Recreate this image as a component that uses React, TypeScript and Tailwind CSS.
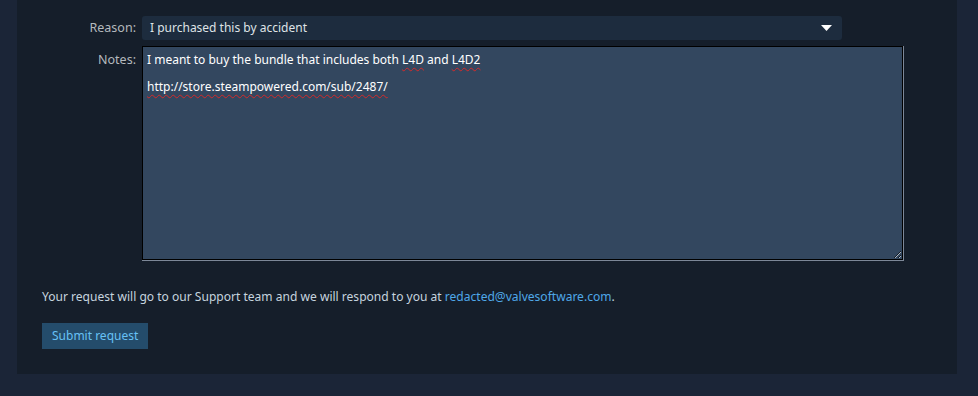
import React from "react";

const font = { fontFamily: '"Noto Sans", "Open Sans", Arial, sans-serif' };

function Wavy({ children }: { children: React.ReactNode }) {
  return (
    <span className="underline decoration-wavy decoration-[#d42a2a] decoration-1 underline-offset-[3px]">
      {children}
    </span>
  );
}

export default function App() {
  return (
    <div
      className="w-[978px] h-[396px] bg-[#1b2537] overflow-hidden"
      style={font}
    >
      <div className="ml-[17px] w-[940px] h-[374px] bg-[#151e2a] pl-[25px] pt-[16px] flex flex-col">
        <div className="flex items-center">
          <div className="w-[100px] pr-[6px] text-right text-[12.5px] text-[#b4b9bd]">Reason:</div>
          <div className="w-[700px] h-[24px] rounded-[3px] bg-[#1d2c3e] flex items-center justify-between pl-[8px] pr-[10px]">
            <span className="text-[12px] text-[#dfe3e6]">I purchased this by accident</span>
            <svg width="11" height="6" viewBox="0 0 11 6">
              <path d="M0 0H11L5.5 6Z" fill="#ffffff" />
            </svg>
          </div>
        </div>
        <div className="flex items-start mt-[6px]">
          <div className="w-[100px] pr-[6px] pt-[5px] text-right text-[12.5px] text-[#b4b9bd]">Notes:</div>
          <div className="border-r border-b border-[#7d8898]">
            <div className="w-[761px] h-[214px] bg-[#33475f] border border-black resize overflow-auto px-[4px] pt-[3px] text-[12px] leading-[19px] text-white">
              <div>
                I meant to buy the bundle that includes both <Wavy>L4D</Wavy> and <Wavy>L4D2</Wavy>
              </div>
              <div className="mt-[8px]">
                <Wavy>http://store.steampowered.com/sub/2487/</Wavy>
              </div>
            </div>
          </div>
        </div>
        <div className="mt-[27px] text-[12.05px] text-[#c6d4df]">
          Your request will go to our Support team and we will respond to you at{" "}
          <span className="text-[#4fa8e8]">redacted@valvesoftware.com</span>.
        </div>
        <div className="mt-[16px]">
          <button className="h-[26px] px-[10px] bg-[#244c6b] text-[12px] text-[#67c1f5]">
            Submit request
          </button>
        </div>
      </div>
    </div>
  );
}
